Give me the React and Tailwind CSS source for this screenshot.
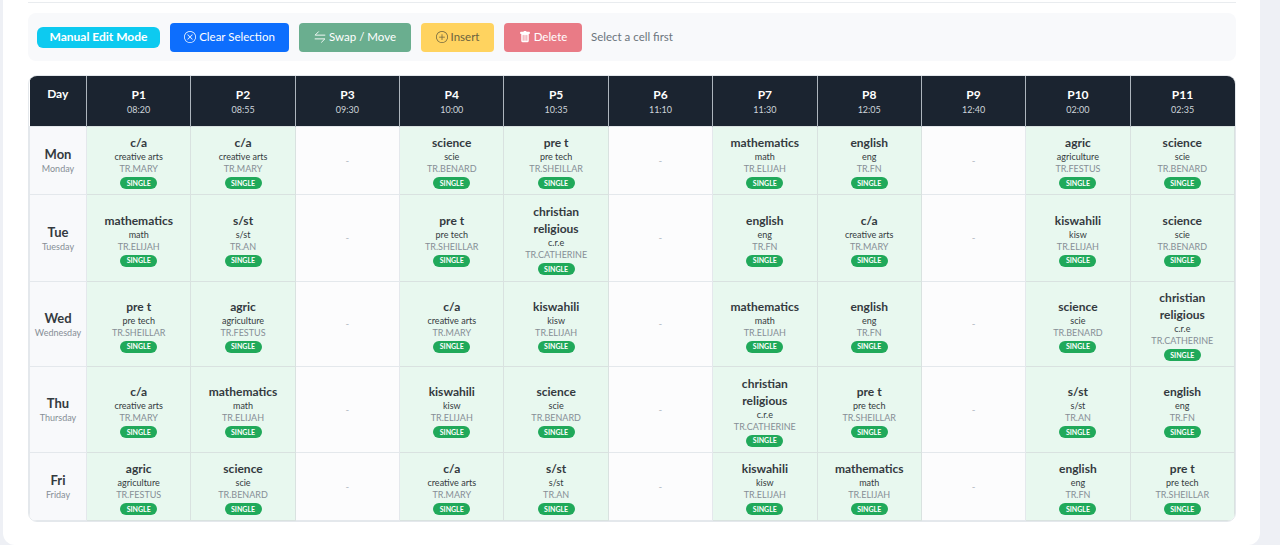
const periods = [
  ['P1', '08:20'], ['P2', '08:55'], ['P3', '09:30'], ['P4', '10:00'], ['P5', '10:35'], ['P6', '11:10'],
  ['P7', '11:30'], ['P8', '12:05'], ['P9', '12:40'], ['P10', '02:00'], ['P11', '02:35'],
];

const subjects = {
  ca: ['c/a', 'creative arts', 'TR.MARY'],
  sci: ['science', 'scie', 'TR.BENARD'],
  pre: ['pre t', 'pre tech', 'TR.SHEILLAR'],
  mat: ['mathematics', 'math', 'TR.ELIJAH'],
  eng: ['english', 'eng', 'TR.FN'],
  agr: ['agric', 'agriculture', 'TR.FESTUS'],
  sst: ['s/st', 's/st', 'TR.AN'],
  cre: ['christian religious', 'c.r.e', 'TR.CATHERINE'],
  kis: ['kiswahili', 'kisw', 'TR.ELIJAH'],
};

const rows = [
  { day: 'Mon', full: 'Monday', h: 'h-[68px]', cells: ['ca', 'ca', null, 'sci', 'pre', null, 'mat', 'eng', null, 'agr', 'sci'] },
  { day: 'Tue', full: 'Tuesday', h: 'h-[87px]', cells: ['mat', 'sst', null, 'pre', 'cre', null, 'eng', 'ca', null, 'kis', 'sci'] },
  { day: 'Wed', full: 'Wednesday', h: 'h-[85px]', cells: ['pre', 'agr', null, 'ca', 'kis', null, 'mat', 'eng', null, 'sci', 'cre'] },
  { day: 'Thu', full: 'Thursday', h: 'h-[86px]', cells: ['ca', 'mat', null, 'kis', 'sci', null, 'cre', 'pre', null, 'sst', 'eng'] },
  { day: 'Fri', full: 'Friday', h: 'h-[68px]', cells: ['agr', 'sci', null, 'ca', 'sst', null, 'kis', 'mat', null, 'eng', 'pre'] },
];

function XCircleIcon() {
  return (
    <svg viewBox="0 0 16 16" className="h-3 w-3" fill="currentColor">
      <path d="M8 15A7 7 0 1 1 8 1a7 7 0 0 1 0 14m0 1A8 8 0 1 0 8 0a8 8 0 0 0 0 16" />
      <path d="M4.646 4.646a.5.5 0 0 1 .708 0L8 7.293l2.646-2.647a.5.5 0 0 1 .708.708L8.707 8l2.647 2.646a.5.5 0 0 1-.708.708L8 8.707l-2.646 2.647a.5.5 0 0 1-.708-.708L7.293 8 4.646 5.354a.5.5 0 0 1 0-.708" />
    </svg>
  );
}

function SwapIcon() {
  return (
    <svg viewBox="0 0 16 16" className="h-3 w-3" fill="none" stroke="currentColor" strokeWidth="1.2" strokeLinecap="round" strokeLinejoin="round">
      <path d="M14.5 5.5H1.5L6 1" />
      <path d="M1.5 10.5h13L10 15" />
    </svg>
  );
}

function PlusCircleIcon() {
  return (
    <svg viewBox="0 0 16 16" className="h-3 w-3" fill="currentColor">
      <path d="M8 15A7 7 0 1 1 8 1a7 7 0 0 1 0 14m0 1A8 8 0 1 0 8 0a8 8 0 0 0 0 16" />
      <path d="M8 4a.5.5 0 0 1 .5.5v3h3a.5.5 0 0 1 0 1h-3v3a.5.5 0 0 1-1 0v-3h-3a.5.5 0 0 1 0-1h3v-3A.5.5 0 0 1 8 4" />
    </svg>
  );
}

function TrashIcon() {
  return (
    <svg viewBox="0 0 16 16" className="h-3 w-3" fill="currentColor">
      <path d="M2.5 1a1 1 0 0 0-1 1v1a1 1 0 0 0 1 1H3v9a2 2 0 0 0 2 2h6a2 2 0 0 0 2-2V4h.5a1 1 0 0 0 1-1V2a1 1 0 0 0-1-1H10a1 1 0 0 0-1-1H7a1 1 0 0 0-1 1zm3 4a.5.5 0 0 1 .5.5v7a.5.5 0 0 1-1 0v-7a.5.5 0 0 1 .5-.5M8 5a.5.5 0 0 1 .5.5v7a.5.5 0 0 1-1 0v-7A.5.5 0 0 1 8 5m3 .5v7a.5.5 0 0 1-1 0v-7a.5.5 0 0 1 1 0" />
    </svg>
  );
}

function ActionButton({ icon, tone, children }) {
  return (
    <button className={`flex h-[29px] items-center justify-center gap-[3px] rounded-[4px] text-[11.5px] ${tone}`}>
      {icon}
      {children}
    </button>
  );
}

function Cell({ id }) {
  if (!id) {
    return <td className="border border-[#e4e8ec] bg-[#fcfcfd] text-center align-middle text-[10px] text-[#adb5bd]">-</td>;
  }
  const [name, code, teacher] = subjects[id];
  return (
    <td className="border border-[#d9e2e0] bg-[#e8f8ef] px-1 pt-[3px] align-middle">
      <div className="flex flex-col items-center text-center">
        <div className="max-w-[84px] text-[12px] leading-[17px] font-bold text-[#343a40]">{name}</div>
        <div className="text-[9px] leading-[12px] text-[#343a40]">{code}</div>
        <div className="text-[9px] leading-[12px] text-[#868e96]">{teacher}</div>
        <span className="mt-[2px] flex h-[12px] w-[37px] items-center justify-center rounded-full bg-[#20a95a] text-[7px] font-bold text-white">SINGLE</span>
      </div>
    </td>
  );
}

export default function App() {
  return (
    <div className="h-[545px] w-[1280px] overflow-hidden bg-[#eef0f5] pl-[3px] font-['Lato','Open_Sans',sans-serif]">
      <div className="h-[545px] w-[1257px] rounded-[12px] rounded-t-none bg-white pt-[2px] pr-[24px] pl-[25px]">
        <div className="border-t border-[#e9ecef]" />
        <div className="mt-[10px] flex h-[48px] items-center rounded-[8px] bg-[#f8f9fb] pl-[9px]">
          <span className="flex h-[21px] w-[123px] items-center justify-center rounded-[6px] bg-[#0dcaf0] text-[12px] font-bold text-white">Manual Edit Mode</span>
          <div className="ml-[10px] flex items-center gap-[10px]">
            <ActionButton icon={<XCircleIcon />} tone="w-[119px] bg-[#0d6efd] text-white">Clear Selection</ActionButton>
            <ActionButton icon={<SwapIcon />} tone="w-[112px] bg-[#6aae8f] text-white">Swap / Move</ActionButton>
            <ActionButton icon={<PlusCircleIcon />} tone="w-[73px] bg-[#ffd35f] text-[#6b6340]">Insert</ActionButton>
            <ActionButton icon={<TrashIcon />} tone="w-[78px] bg-[#e97b86] text-white">Delete</ActionButton>
          </div>
          <span className="ml-[9px] text-[11.5px] text-[#6c757d]">Select a cell first</span>
        </div>
        <div className="mt-[14px] overflow-hidden rounded-[9px] border border-[#e4e8ec]">
          <table className="w-full table-fixed border-collapse">
            <thead>
              <tr className="h-[50px] bg-[#1b2430] text-white">
                <th className="w-[57px] border-r border-[#adb5bd] pb-[14px] text-[12px] font-bold">Day</th>
                {periods.map(([p, t]) => (
                  <th key={p} className="border-r border-[#adb5bd] pt-[2px] last:border-r-0">
                    <div className="text-[12px] leading-[16px] font-bold">{p}</div>
                    <div className="text-[9px] leading-[14px] font-normal text-[#ced4da]">{t}</div>
                  </th>
                ))}
              </tr>
            </thead>
            <tbody>
              {rows.map((row) => (
                <tr key={row.day} className={row.h}>
                  <td className="border border-[#e4e8ec] bg-[#f8f9fb] pt-[1px] text-center align-middle">
                    <div className="text-[13px] leading-[17px] font-bold text-[#343a40]">{row.day}</div>
                    <div className="text-[9px] leading-[12px] text-[#868e96]">{row.full}</div>
                  </td>
                  {row.cells.map((id, i) => (
                    <Cell key={i} id={id} />
                  ))}
                </tr>
              ))}
            </tbody>
          </table>
        </div>
      </div>
    </div>
  );
}
